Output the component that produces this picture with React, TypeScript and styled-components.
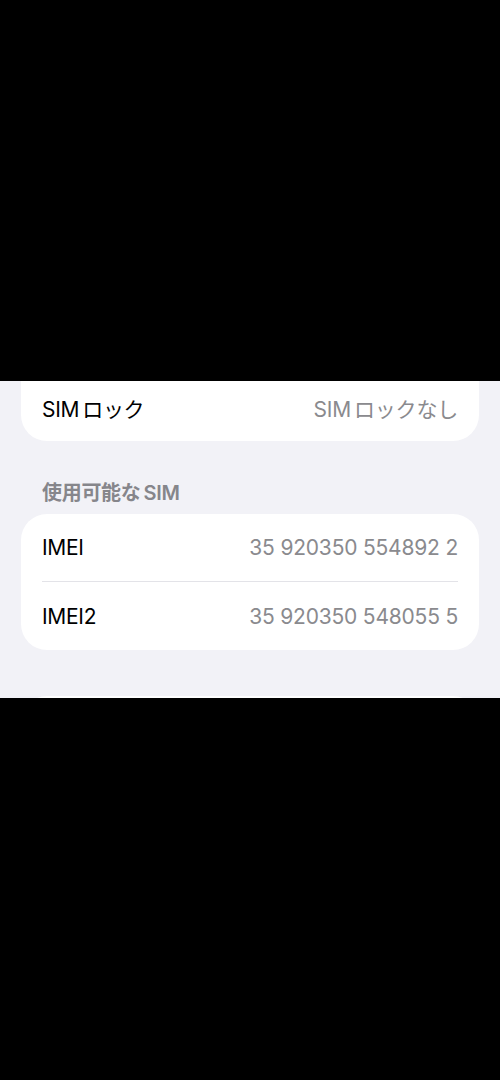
import React from "react";
import styled, { createGlobalStyle } from "styled-components";

const GlobalStyle = createGlobalStyle`
  html, body {
    margin: 0;
    padding: 0;
    background: #000;
  }
  body {
    font-family: Inter, "Noto Sans CJK JP", sans-serif;
    -webkit-font-smoothing: antialiased;
  }
`;

const Screen = styled.div`
  width: 500px;
  height: 1080px;
  display: flex;
  flex-direction: column;
  background: #000;
`;

const BlackBand = styled.div<{ $h: number }>`
  height: ${(p) => p.$h}px;
  flex-shrink: 0;
  background: #000;
`;

const Viewport = styled.div`
  height: 317px;
  flex-shrink: 0;
  overflow: hidden;
  background: #f2f2f7;
  display: flex;
  flex-direction: column;
  padding: 0 21px;
`;

const Card = styled.div<{ $clipTop?: boolean; $mt?: number; $pb?: number }>`
  background: #fff;
  border-radius: ${(p) => (p.$clipTop ? "0 0 26px 26px" : "26px")};
  margin-top: ${(p) => p.$mt ?? 0}px;
  padding: 0 21px ${(p) => p.$pb ?? 0}px;
  flex-shrink: 0;
`;

const Row = styled.div<{ $h: number; $divider?: boolean }>`
  height: ${(p) => p.$h}px;
  display: flex;
  align-items: center;
  justify-content: space-between;
  font-size: 21px;
  border-bottom: ${(p) => (p.$divider ? "1px solid #e3e3e8" : "none")};
`;

const Label = styled.span`
  color: #000;
  letter-spacing: -0.3px;
`;

const Value = styled.span`
  color: #8a8a8e;
  letter-spacing: -0.2px;
`;

// iOS puts a little air between Latin and kana
const Gap = styled.span<{ $side: "left" | "right" }>`
  margin-${(p) => p.$side}: 3px;
`;

const SectionHeader = styled.div`
  color: #86868b;
  font-size: 20px;
  font-weight: 600;
  padding: 0 21px;
  margin-top: 38px;
  height: 28px;
  line-height: 28px;
  letter-spacing: -0.3px;
`;

const NextCard = styled.div`
  background: #fff;
  border-radius: 26px 26px 0 0;
  margin-top: 46px;
  height: 40px;
  flex-shrink: 0;
`;

export default function App() {
  return (
    <>
      <GlobalStyle />
      <Screen>
        <BlackBand $h={381} />
        <Viewport>
          <Card $clipTop $pb={6}>
            <Row $h={54}>
              <Label>
                <Gap $side="right">SIM</Gap>ロック
              </Label>
              <Value>
                <Gap $side="right">SIM</Gap>ロックなし
              </Value>
            </Row>
          </Card>
          <SectionHeader>
            使用可能な<Gap $side="left">SIM</Gap>
          </SectionHeader>
          <Card $mt={7}>
            <Row $h={67} $divider>
              <Label>IMEI</Label>
              <Value>35 920350 554892 2</Value>
            </Row>
            <Row $h={68}>
              <Label>IMEI2</Label>
              <Value>35 920350 548055 5</Value>
            </Row>
          </Card>
          <NextCard />
        </Viewport>
        <BlackBand $h={382} />
      </Screen>
    </>
  );
}
